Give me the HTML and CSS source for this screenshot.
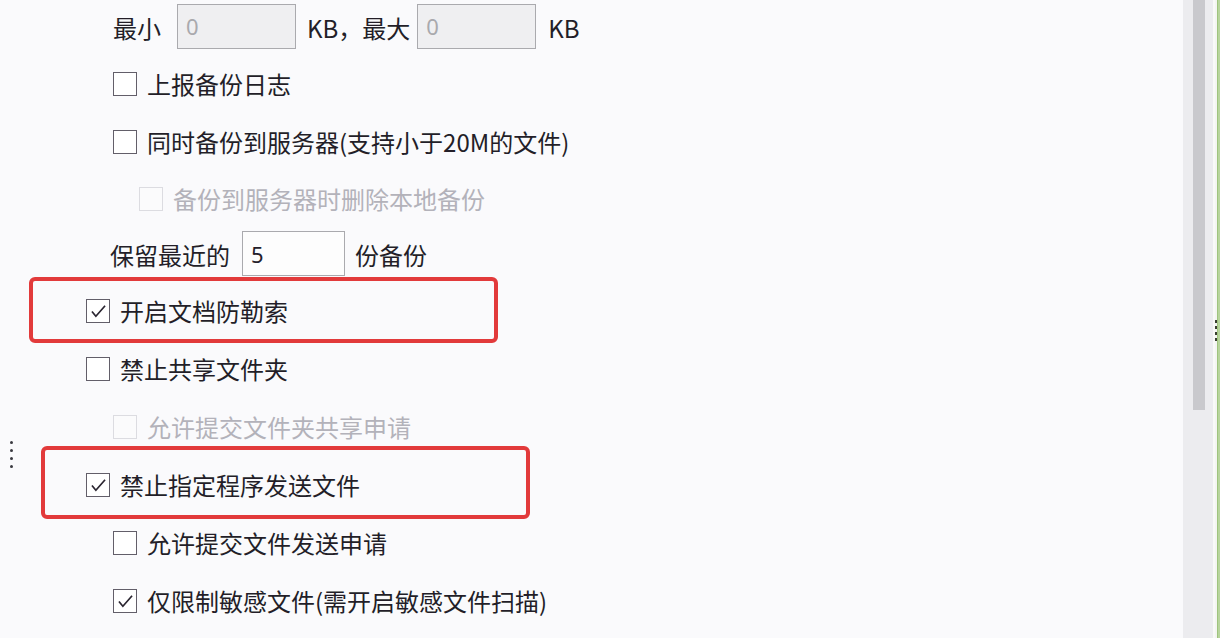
FILE: index.html
```html
<!DOCTYPE html>
<html lang="zh-CN">
<head>
<meta charset="utf-8">
<title>备份设置</title>
<link rel="stylesheet" href="styles.css">
</head>
<body>
<div class="page">
  <div class="grip">
    <span class="dot"></span><span class="dot"></span><span class="dot"></span><span class="dot"></span>
  </div>
  <div class="content">
    <div class="row r-top lvl2">
      <span class="lbl">最小</span>
      <span class="field dis">0</span>
      <span class="lbl kb">KB，最大</span>
      <span class="field dis">0</span>
      <span class="lbl kb2">KB</span>
    </div>
    <div class="row lvl2">
      <span class="cb"></span><span class="txt">上报备份日志</span>
    </div>
    <div class="row lvl2">
      <span class="cb"></span><span class="txt">同时备份到服务器(支持小于20M的文件)</span>
    </div>
    <div class="row r-short lvl3 disabled">
      <span class="cb"></span><span class="txt">备份到服务器时删除本地备份</span>
    </div>
    <div class="row r-keep lvl2k">
      <span class="lbl">保留最近的</span>
      <span class="field num">5</span>
      <span class="lbl unit">份备份</span>
    </div>
    <div class="row lvl1">
      <span class="cb on"><svg viewBox="0 0 24 24"><path d="M4.5 12 L9 17.5 L19.5 5.5"/></svg></span><span class="txt">开启文档防勒索</span>
    </div>
    <div class="row lvl1">
      <span class="cb"></span><span class="txt">禁止共享文件夹</span>
    </div>
    <div class="row lvl2 disabled">
      <span class="cb"></span><span class="txt">允许提交文件夹共享申请</span>
    </div>
    <div class="row lvl1">
      <span class="cb on"><svg viewBox="0 0 24 24"><path d="M4.5 12 L9 17.5 L19.5 5.5"/></svg></span><span class="txt">禁止指定程序发送文件</span>
    </div>
    <div class="row lvl2">
      <span class="cb"></span><span class="txt">允许提交文件发送申请</span>
    </div>
    <div class="row lvl2">
      <span class="cb on"><svg viewBox="0 0 24 24"><path d="M4.5 12 L9 17.5 L19.5 5.5"/></svg></span><span class="txt">仅限制敏感文件(需开启敏感文件扫描)</span>
    </div>
    <div class="mark mark-a"></div>
    <div class="mark mark-b"></div>
  </div>
  <div class="scroll">
    <div class="thumb"></div>
  </div>
  <div class="edge">
    <div class="edge-line"><span class="tick"></span></div>
    <div class="edge-fill"></div>
  </div>
</div>
</body>
</html>
```

FILE: styles.css
```css
* { box-sizing: border-box; }
html, body {
  margin: 0;
  padding: 0;
  width: 1220px;
  height: 638px;
  overflow: hidden;
  background: #fafafc;
}
body {
  font-family: "Noto Sans CJK SC", "Noto Sans", sans-serif;
  color: #231e28;
}
.page {
  display: flex;
  height: 638px;
}
.grip {
  width: 24px;
  flex: none;
  display: flex;
  flex-direction: column;
  padding-top: 441px;
  padding-left: 10px;
  gap: 5px;
}
.dot {
  width: 3px;
  height: 3px;
  border-radius: 50%;
  background: #3a3a40;
}
.content {
  position: relative;
  width: 1159px;
  flex: none;
  display: flex;
  flex-direction: column;
}
.row {
  height: 58px;
  display: flex;
  align-items: center;
  font-size: 24px;
  line-height: 1;
  white-space: nowrap;
}
.r-top { height: 55px; }
.r-short { height: 56px; }
.r-keep { height: 55px; }
.lvl1 { padding-left: 62px; }
.lvl2 { padding-left: 89px; }
.lvl2k { padding-left: 86px; }
.lvl3 { padding-left: 115px; }

.cb {
  width: 24px;
  height: 24px;
  flex: none;
  border: 1.5px solid #625e69;
  background: #ffffff;
  margin-right: 10px;
  display: flex;
  align-items: center;
  justify-content: center;
}
.cb svg {
  width: 21px;
  height: 21px;
}
.cb svg path {
  fill: none;
  stroke: #2a2530;
  stroke-width: 1.9;
  stroke-linejoin: miter;
}
.disabled .cb {
  border-color: #dcdce1;
  background: #fbfbfc;
}
.disabled .txt { color: #b3b2ba; }

.field {
  height: 45px;
  border: 1.5px solid #aaaaae;
  display: flex;
  align-items: center;
  padding-left: 8px;
  font-family: "Noto Sans", "Noto Sans CJK SC", sans-serif;
  font-size: 22px;
  flex: none;
}
.field.dis {
  width: 119px;
  background: #efeff1;
  color: #a9a9ad;
  margin-left: 16px;
  margin-top: -3px;
}
.field.num {
  width: 103px;
  background: #fdfdfd;
  color: #24202a;
  margin-left: 12px;
  margin-top: -2px;
}
.lbl.kb { margin-left: 11px; margin-right: -9px; }
.lbl.kb2 { margin-left: 12px; }
.lbl.unit { margin-left: 10px; }

.mark {
  position: absolute;
  border: 4px solid #e23a3b;
  border-radius: 6px;
  pointer-events: none;
}
.mark-a {
  left: 5px;
  top: 277px;
  width: 469px;
  height: 66px;
}
.mark-b {
  left: 17px;
  top: 446px;
  width: 489px;
  height: 73px;
}

.scroll {
  width: 30px;
  flex: none;
  background: #ececef;
  padding-left: 10px;
}
.thumb {
  width: 12px;
  height: 410px;
  background: #c9c9cd;
}
.edge {
  flex: 1;
  display: flex;
}
.edge-line {
  width: 4px;
  background: #f4f5f2;
  border-left: 2px solid #f9faf8;
  display: flex;
  flex-direction: column;
  padding-top: 320px;
}
.edge-fill {
  flex: 1;
  background: #b7d49c;
  border-left: 1px solid #9fc47e;
}
.tick {
  display: block;
  width: 2px;
  height: 24px;
  background: repeating-linear-gradient(#3a4030 0 3px, transparent 3px 6px);
}
```
